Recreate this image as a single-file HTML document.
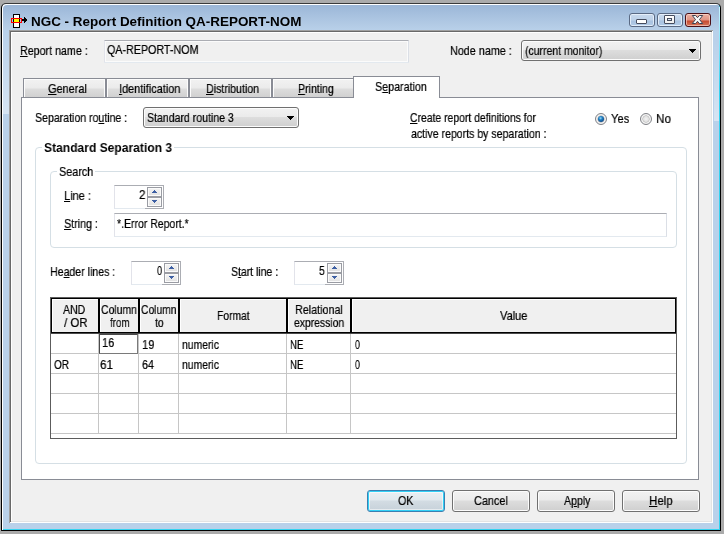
<!DOCTYPE html>
<html>
<head>
<meta charset="utf-8">
<title>NGC - Report Definition QA-REPORT-NOM</title>
<style>
html,body{margin:0;padding:0;}
body{width:724px;height:534px;background:#ababab;overflow:hidden;position:relative;
 font-family:"Liberation Sans",sans-serif;font-size:13px;color:#000;}
*{box-sizing:border-box;}
.a{position:absolute;}
.t{will-change:transform;position:absolute;white-space:nowrap;line-height:15px;height:15px;font-size:13px;transform-origin:0 0;-webkit-text-stroke:0.22px #000;}
.t.b{font-weight:bold;-webkit-text-stroke:0;}
u{text-decoration:underline;text-decoration-thickness:1px;text-underline-offset:1px;}
#win{left:1px;top:3px;width:720px;height:528px;border:1px solid #000;border-top-color:#3a3a3a;border-radius:5px 5px 1px 1px;
 background:linear-gradient(#9ab5d6 0px,#a6c0de 10px,#b4cce6 22px,#b9d1ea 27px,#b9d1ea 100%);
 box-shadow:inset 1px 1px 0 #fff, inset -1px -1px 0 #35d3f0;}
#client{left:9px;top:30px;width:704px;height:493px;background:#f0f0f0;
 box-shadow:inset 1px 1px 0 #a0a0a0, inset -1px -1px 0 #fff, inset 2px 2px 0 #696969, inset -2px -2px 0 #e3e3e3, inset 3px 3px 0 #fff;}
.cap{top:13px;height:14px;border:1px solid #5a6a84;border-radius:3px;background:linear-gradient(#c8d9ed 0px,#bed2e9 6px,#a8c2e0 7px,#b2cbe7 12px);box-shadow:inset 0 0 0 1px rgba(240,247,255,.75);}
#cclose{width:26px !important;background:linear-gradient(#ebb0a3 0px,#e09383 6px,#c74a30 7px,#d4765c 12px);border-color:#4a0f16;box-shadow:inset 0 0 0 1px rgba(255,225,215,.6);}
.ro{background:#f0f0f0;border:1px solid #e3e9ef;border-top-color:#abadb3;border-left-color:#e2e3ea;border-right-color:#dbdfe6;border-radius:1px;box-shadow:inset 0 0 0 1px #fbfbfb;}
.edit{background:#fff;border:1px solid #e3e9ef;border-top-color:#abadb3;border-left-color:#e2e3ea;border-right-color:#dbdfe6;}
.combo{height:21px;border:1px solid #707070;border-radius:3px;background:linear-gradient(#f2f2f2 0%,#ebebeb 46%,#dddddd 50%,#cfcfcf 100%);box-shadow:inset 0 0 0 1px #fcfcfc;}
.arr{position:absolute;right:4px;top:8px;width:7px;height:4px;}
.tab{top:78px;height:20px;width:83px;border:1px solid #898c95;border-bottom:none;
 background:linear-gradient(#f2f2f2 0px,#ebebeb 9px,#dddddd 10px,#cfcfcf 19px);box-shadow:inset 1px 1px 0 #fcfcfc, inset -1px 0 0 #fcfcfc;}
#pane{left:21px;top:97px;width:678px;height:383px;background:#fff;border:1px solid #898c95;}
#tabsel{left:353px;top:76px;width:87px;height:22px;background:#fff;border:1px solid #898c95;border-bottom:none;}
.gb{border:1px solid #d5dfe5;border-radius:4px;}
.gl{position:absolute;background:#fff;height:3px;}
.btn{top:490px;width:78px;height:22px;border:1px solid #707070;border-radius:3px;
 background:linear-gradient(#f2f2f2 0px,#ebebeb 9px,#dddddd 10px,#cfcfcf 20px);box-shadow:inset 0 0 0 1px #fcfcfc;}
.btn.def{border-color:#3c7fb1;background:linear-gradient(#eaf0f4 0px,#e1e9ee 9px,#d3dce3 10px,#c6d1d9 20px);box-shadow:inset 0 0 0 1px #31d0f6, inset 0 0 0 2px rgba(255,255,255,.55);}
.spin{width:50px;height:24px;background:#fff;border:1px solid #e3e9ef;border-top-color:#abadb3;border-left-color:#e2e3ea;border-right-color:#abadb3;}
.spin::after{content:"";position:absolute;right:-1px;bottom:-1px;width:19px;height:1px;background:#abadb3;}
.sb{position:absolute;left:32px;width:15px;height:10px;border:1px solid #9a9ca3;background:linear-gradient(#f4f4f4 0%,#ececec 50%,#dedede 100%);box-shadow:inset 0 0 0 1px #fbfbfb;}
.sb svg{position:absolute;left:4px;top:2px;}
.sb.up{top:1px}
.sb.dn{top:11px}
.radio{width:12px;height:12px;border-radius:50%;border:1px solid #7f8186;background:radial-gradient(circle at 50% 50%,#f4f4f4 0%,#e0e0e0 38%,#b9b9b9 46%,#f6f6f6 56%,#e4e4e4 100%);}
.radio.on::after{content:"";position:absolute;left:2px;top:2px;width:6px;height:6px;border-radius:50%;background:radial-gradient(circle at 42% 36%,#9fdcf8 0%,#2384c6 32%,#0f4c8c 70%,#0a3566 100%);}
.hd{position:absolute;top:299px;height:33px;background:#f0f0f0;box-shadow:inset 1px 1px 0 #fff;}
.hl{position:absolute;left:51px;width:625px;height:1px;background:#c6c6c6;}
.vl{position:absolute;top:334px;width:1px;height:100px;background:#c6c6c6;}

.refl{position:absolute;width:6px;}

</style>
</head>
<body>
<div id="win" class="a"></div>
<div id="client" class="a"></div>

<div class="a" style="left:3px;top:31px;width:6px;height:83px;background:linear-gradient(rgba(255,255,255,0),rgba(255,255,255,.42))"></div>
<div class="a" style="left:714px;top:40px;width:5px;height:81px;background:linear-gradient(rgba(255,255,255,0),rgba(255,255,255,.42))"></div>
<div class="a" style="left:719px;top:7px;width:1px;height:80px;background:linear-gradient(#c9f4ff,#35d3f0)"></div>
<!-- title icon -->
<svg class="a" style="left:0;top:0" width="40" height="32" viewBox="0 0 40 32" shape-rendering="crispEdges">
 <rect x="13.5" y="14.5" width="6" height="13" fill="#fff" stroke="#000"/>
 <rect x="14" y="19" width="5" height="3" fill="#ffff00"/>
 <rect x="11.5" y="18.5" width="10" height="4" fill="none" stroke="#ff0000"/>
 <rect x="22" y="19" width="3" height="2" fill="#000"/>
 <path d="M24 17h1v1h1v1h1v2h-1v1h-1v1h-1z" fill="#000"/>
</svg>

<!-- caption buttons -->
<div class="a cap" style="left:629px;width:26px"><div class="a" style="left:6px;top:5px;width:11px;height:5px;background:#fff;border:1px solid #454c5e;border-radius:1px"></div></div>
<div class="a cap" style="left:657px;width:26px"><div class="a" style="left:6px;top:1px;width:11px;height:9px;background:linear-gradient(#fff,#eee);border:1px solid #454c5e;border-radius:1px"></div><div class="a" style="left:9px;top:4px;width:5px;height:3px;background:#dfeaf6;border:1px solid #454c5e"></div></div>
<div id="cclose" class="a cap" style="left:685px;width:27px">
 <svg class="a" style="left:5px;top:0px" width="14" height="12" viewBox="0 0 14 12"><path d="M1.3 1.5h3.3L6.5 3.7 8.4 1.5h3.3L8.5 5.5l3.2 4H8.4L6.5 7.3 4.6 9.5H1.3l3.2-4z" fill="#fafafa" stroke="#3d4354" stroke-width="1" stroke-linejoin="round"/></svg>
</div>

<!-- row 1 -->
<div class="a ro" style="left:104px;top:40px;width:305px;height:23px"></div>
<div class="a combo" style="left:521px;top:40px;width:180px"><svg class="arr" viewBox="0 0 7 4" shape-rendering="crispEdges"><path d="M0 0h7v1h-1v1h-1v1h-1v1h-1v-1h-1v-1h-1v-1h-1z" fill="#000"/></svg></div>

<!-- tabs -->
<div class="a tab" style="left:23px"></div>
<div class="a tab" style="left:106px"></div>
<div class="a tab" style="left:189px"></div>
<div class="a tab" style="left:272px"></div>
<div id="pane" class="a"></div>
<div id="tabsel" class="a"></div>

<!-- pane content -->
<div class="a combo" style="left:143px;top:107px;width:156px"><svg class="arr" viewBox="0 0 7 4" shape-rendering="crispEdges"><path d="M0 0h7v1h-1v1h-1v1h-1v1h-1v-1h-1v-1h-1v-1h-1z" fill="#000"/></svg></div>
<div class="a radio on" style="left:595px;top:113px"></div>
<div class="a radio" style="left:640px;top:113px"></div>

<div class="a gb" style="left:35px;top:147px;width:652px;height:317px"></div>
<div class="gl" style="left:42px;top:146px;width:132px"></div>
<div class="a gb" style="left:50px;top:171px;width:627px;height:77px"></div>
<div class="gl" style="left:57px;top:170px;width:38px"></div>

<div class="a spin" style="left:114px;top:185px"><div class="sb up"><svg width="5" height="3" viewBox="0 0 5 3" shape-rendering="crispEdges"><path d="M2 0h1v1h1v1h1v1h-5v-1h1v-1h1z" fill="#3d5fa3"/></svg></div><div class="sb dn"><svg width="5" height="3" viewBox="0 0 5 3" shape-rendering="crispEdges"><path d="M0 0h5v1h-1v1h-1v1h-1v-1h-1v-1h-1z" fill="#3d5fa3"/></svg></div></div>
<div class="a edit" style="left:114px;top:213px;width:553px;height:24px"></div>
<div class="a spin" style="left:131px;top:261px"><div class="sb up"><svg width="5" height="3" viewBox="0 0 5 3" shape-rendering="crispEdges"><path d="M2 0h1v1h1v1h1v1h-5v-1h1v-1h1z" fill="#3d5fa3"/></svg></div><div class="sb dn"><svg width="5" height="3" viewBox="0 0 5 3" shape-rendering="crispEdges"><path d="M0 0h5v1h-1v1h-1v1h-1v-1h-1v-1h-1z" fill="#3d5fa3"/></svg></div></div>
<div class="a spin" style="left:294px;top:261px"><div class="sb up"><svg width="5" height="3" viewBox="0 0 5 3" shape-rendering="crispEdges"><path d="M2 0h1v1h1v1h1v1h-5v-1h1v-1h1z" fill="#3d5fa3"/></svg></div><div class="sb dn"><svg width="5" height="3" viewBox="0 0 5 3" shape-rendering="crispEdges"><path d="M0 0h5v1h-1v1h-1v1h-1v-1h-1v-1h-1z" fill="#3d5fa3"/></svg></div></div>

<!-- grid -->
<div class="a" style="left:50px;top:297px;width:627px;height:142px;background:#fff;border:1px solid #5c5c5c"></div>
<div class="a" style="left:51px;top:298px;width:625px;height:35px;background:#000"></div>
<div class="a" style="left:51px;top:333px;width:625px;height:1px;background:#4a4a4a"></div>
<div class="hd" style="left:52px;width:46px"></div>
<div class="hd" style="left:100px;width:38px"></div>
<div class="hd" style="left:140px;width:38px"></div>
<div class="hd" style="left:180px;width:106px"></div>
<div class="hd" style="left:288px;width:62px"></div>
<div class="hd" style="left:352px;width:323px"></div>
<div class="hl" style="top:353px"></div><div class="hl" style="top:373px"></div><div class="hl" style="top:393px"></div><div class="hl" style="top:413px"></div><div class="hl" style="top:433px"></div>
<div class="vl" style="left:98px"></div><div class="vl" style="left:138px"></div><div class="vl" style="left:178px"></div><div class="vl" style="left:286px"></div><div class="vl" style="left:350px"></div>
<div class="a" style="left:99px;top:334px;width:39px;height:20px;background:#fff;border:1px solid #4a4a4a;border-right-color:#7a7a7a;border-bottom-color:#7a7a7a"></div>

<!-- buttons -->
<div class="a btn def" style="left:367px"></div>
<div class="a btn" style="left:452px"></div>
<div class="a btn" style="left:537px"></div>
<div class="a btn" style="left:622px"></div>

<!-- text layer -->
<div class="t b" style="left:31.46px;top:14px;transform:scaleX(1.0343)">NGC - Report Definition QA-REPORT-NOM</div>
<div class="t" style="left:20.48px;top:43px;transform:scaleX(0.8225)"><u>R</u>eport name :</div>
<div class="t" style="left:106.88px;top:42px;transform:scaleX(0.8239)">QA-REPORT-NOM</div>
<div class="t" style="left:450.22px;top:43px;transform:scaleX(0.8292)">Node name :</div>
<div class="t" style="left:525.20px;top:43px;transform:scaleX(0.8043)">(current monitor)</div>
<div class="t" style="left:47.71px;top:81px;transform:scaleX(0.8398)"><u>G</u>eneral</div>
<div class="t" style="left:118.96px;top:81px;transform:scaleX(0.8408)"><u>I</u>dentification</div>
<div class="t" style="left:205.73px;top:81px;transform:scaleX(0.8167)"><u>D</u>istribution</div>
<div class="t" style="left:297.99px;top:81px;transform:scaleX(0.8143)"><u>P</u>rinting</div>
<div class="t" style="left:375.23px;top:79px;transform:scaleX(0.8230)">S<u>e</u>paration</div>
<div class="t" style="left:35.24px;top:110px;transform:scaleX(0.8126)">Separation ro<u>u</u>tine :</div>
<div class="t" style="left:147.19px;top:110px;transform:scaleX(0.8113)">Standard routine 3</div>
<div class="t" style="left:410.00px;top:110px;transform:scaleX(0.7990)"><u>C</u>reate report definitions for</div>
<div class="t" style="left:410.74px;top:126px;transform:scaleX(0.8118)">active reports by separation :</div>
<div class="t" style="left:611.19px;top:111px;transform:scaleX(0.8600)">Yes</div>
<div class="t" style="left:656.15px;top:111px;transform:scaleX(0.8967)">No</div>
<div class="t b" style="left:43.87px;top:140px;transform:scaleX(0.9285)">Standard Separation 3</div>
<div class="t" style="left:58.97px;top:164px;transform:scaleX(0.8300)">Search</div>
<div class="t" style="left:64.45px;top:188px;transform:scaleX(0.8483)"><u>L</u>ine :</div>
<div class="t" style="left:139.06px;top:187px;transform:scaleX(0.8917)">2</div>
<div class="t" style="left:64.47px;top:216px;transform:scaleX(0.8256)"><u>S</u>tring :</div>
<div class="t" style="left:116.99px;top:216px;transform:scaleX(0.8069)">*.Error Report.*</div>
<div class="t" style="left:49.99px;top:264px;transform:scaleX(0.8135)">He<u>a</u>der lines :</div>
<div class="t" style="left:157.05px;top:263px;transform:scaleX(0.7071)">0</div>
<div class="t" style="left:230.99px;top:264px;transform:scaleX(0.8061)">S<u>t</u>art line :</div>
<div class="t" style="left:319.27px;top:263px;transform:scaleX(0.7833)">5</div>
<div class="t" style="left:63.30px;top:302px;transform:scaleX(0.8111)">AND</div>
<div class="t" style="left:63.80px;top:315px;transform:scaleX(0.8846)">/ OR</div>
<div class="t" style="left:101.20px;top:302px;transform:scaleX(0.8023)">Column</div>
<div class="t" style="left:109.90px;top:315px;transform:scaleX(0.7440)">from</div>
<div class="t" style="left:141.31px;top:302px;transform:scaleX(0.7930)">Column</div>
<div class="t" style="left:154.60px;top:315px;transform:scaleX(0.8100)">to</div>
<div class="t" style="left:216.61px;top:308px;transform:scaleX(0.7925)">Format</div>
<div class="t" style="left:295.07px;top:302px;transform:scaleX(0.8268)">Relational</div>
<div class="t" style="left:294.10px;top:315px;transform:scaleX(0.7967)">expression</div>
<div class="t" style="left:500.30px;top:308px;transform:scaleX(0.8500)">Value</div>
<div class="t" style="left:101.75px;top:335px;transform:scaleX(0.8462)">16</div>
<div class="t" style="left:142.24px;top:337px;transform:scaleX(0.8615)">19</div>
<div class="t" style="left:182.00px;top:337px;transform:scaleX(0.8000)">numeric</div>
<div class="t" style="left:290.16px;top:337px;transform:scaleX(0.7353)">NE</div>
<div class="t" style="left:354.90px;top:337px;transform:scaleX(0.6857)">0</div>
<div class="t" style="left:54.27px;top:357px;transform:scaleX(0.7750)">OR</div>
<div class="t" style="left:100.40px;top:357px;transform:scaleX(0.9000)">61</div>
<div class="t" style="left:142.48px;top:357px;transform:scaleX(0.8231)">64</div>
<div class="t" style="left:182.00px;top:357px;transform:scaleX(0.8000)">numeric</div>
<div class="t" style="left:290.16px;top:357px;transform:scaleX(0.7353)">NE</div>
<div class="t" style="left:354.90px;top:357px;transform:scaleX(0.6857)">0</div>
<div class="t" style="left:398.23px;top:493px;transform:scaleX(0.8206)">OK</div>
<div class="t" style="left:473.96px;top:493px;transform:scaleX(0.8385)">Cancel</div>
<div class="t" style="left:563.55px;top:493px;transform:scaleX(0.8109)">A<u>p</u>ply</div>
<div class="t" style="left:649.41px;top:493px;transform:scaleX(0.8880)"><u>H</u>elp</div>
</body>
</html>
